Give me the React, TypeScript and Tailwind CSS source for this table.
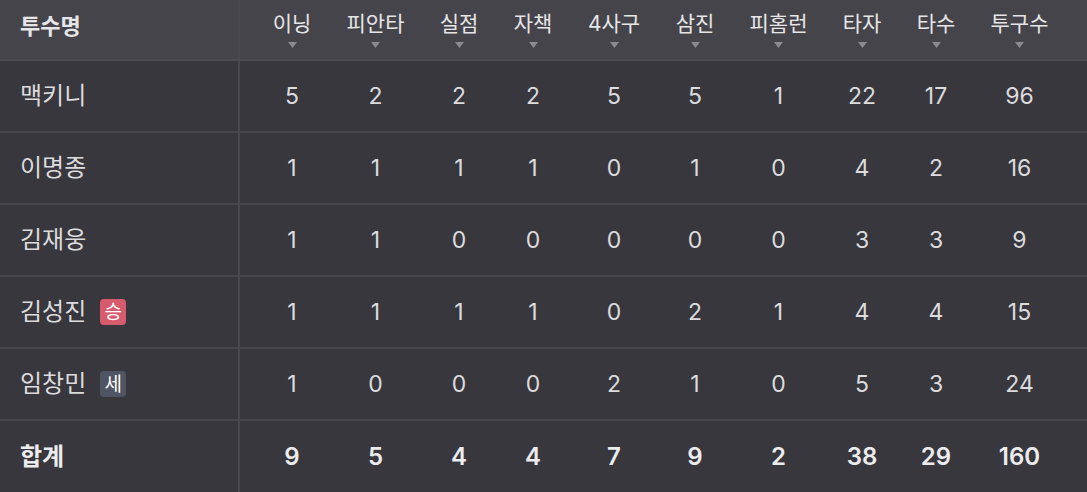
import React from "react";

const columns = ["이닝", "피안타", "실점", "자책", "4사구", "삼진", "피홈런", "타자", "타수", "투구수"];

const pitchers: { name: string; badge?: "승" | "세"; stats: number[] }[] = [
  { name: "맥키니", stats: [5, 2, 2, 2, 5, 5, 1, 22, 17, 96] },
  { name: "이명종", stats: [1, 1, 1, 1, 0, 1, 0, 4, 2, 16] },
  { name: "김재웅", stats: [1, 1, 0, 0, 0, 0, 0, 3, 3, 9] },
  { name: "김성진", badge: "승", stats: [1, 1, 1, 1, 0, 2, 1, 4, 4, 15] },
  { name: "임창민", badge: "세", stats: [1, 0, 0, 0, 2, 1, 0, 5, 3, 24] },
];

const totals = [9, 5, 4, 4, 7, 9, 2, 38, 29, 160];

const gridCols =
  "grid grid-cols-[74px_93px_74px_74px_88px_74px_93px_74px_74px_93px] pl-[15px]";

const Badge = ({ type }: { type: "승" | "세" }) => (
  <span
    className={`ml-[14px] flex h-[26px] w-[26px] items-center justify-center rounded-[4px] text-[19px] leading-none text-white ${
      type === "승" ? "bg-[#d65b6d]" : "bg-[#4f5563]"
    }`}
  >
    {type}
  </span>
);

const Row = ({
  name,
  badge,
  stats,
  bold,
  last,
}: {
  name: string;
  badge?: "승" | "세";
  stats: number[];
  bold?: boolean;
  last?: boolean;
}) => (
  <div
    className={`flex ${last ? "h-[71px]" : "h-[72px] border-b-2 border-[#47464c]"} ${
      bold ? "font-semibold text-[#ececee]" : "text-[#dcdcde]"
    }`}
  >
    <div className="flex w-[240px] shrink-0 items-center border-r-2 border-[#4a494f] pl-[20px] text-[24px]">
      <span>{name}</span>
      {badge && <Badge type={badge} />}
    </div>
    <div className={`${gridCols} items-center ${bold ? "text-[24px]" : "text-[23px]"}`}>
      {stats.map((v, i) => (
        <div key={i} className="text-center">
          {v}
        </div>
      ))}
    </div>
  </div>
);

export default function App() {
  return (
    <div
      className="h-[492px] w-[1087px] overflow-hidden bg-[#38373d]"
      style={{ fontFamily: 'Inter, "Noto Sans CJK KR", sans-serif' }}
    >
      {/* 헤더 */}
      <div className="flex h-[61px] border-b-2 border-[#4d4c52] bg-[#45444a] text-[#e6e6e8]">
        <div className="flex w-[240px] shrink-0 items-center border-r-2 border-[#4a494f] pb-[6px] pl-[20px] text-[22px] font-bold">
          투수명
        </div>
        <div className={gridCols}>
          {columns.map((c) => (
            <div key={c} className="flex flex-col items-center pt-[9px]">
              <span className="text-[21px] leading-[30px]">{c}</span>
              <svg width="9" height="6" viewBox="0 0 9 6" className="mt-[3px]">
                <path d="M0 0 H9 L4.5 6 Z" fill="#8b8a90" />
              </svg>
            </div>
          ))}
        </div>
      </div>

      {pitchers.map((p) => (
        <Row key={p.name} name={p.name} badge={p.badge} stats={p.stats} />
      ))}
      <Row name="합계" stats={totals} bold last />
    </div>
  );
}
